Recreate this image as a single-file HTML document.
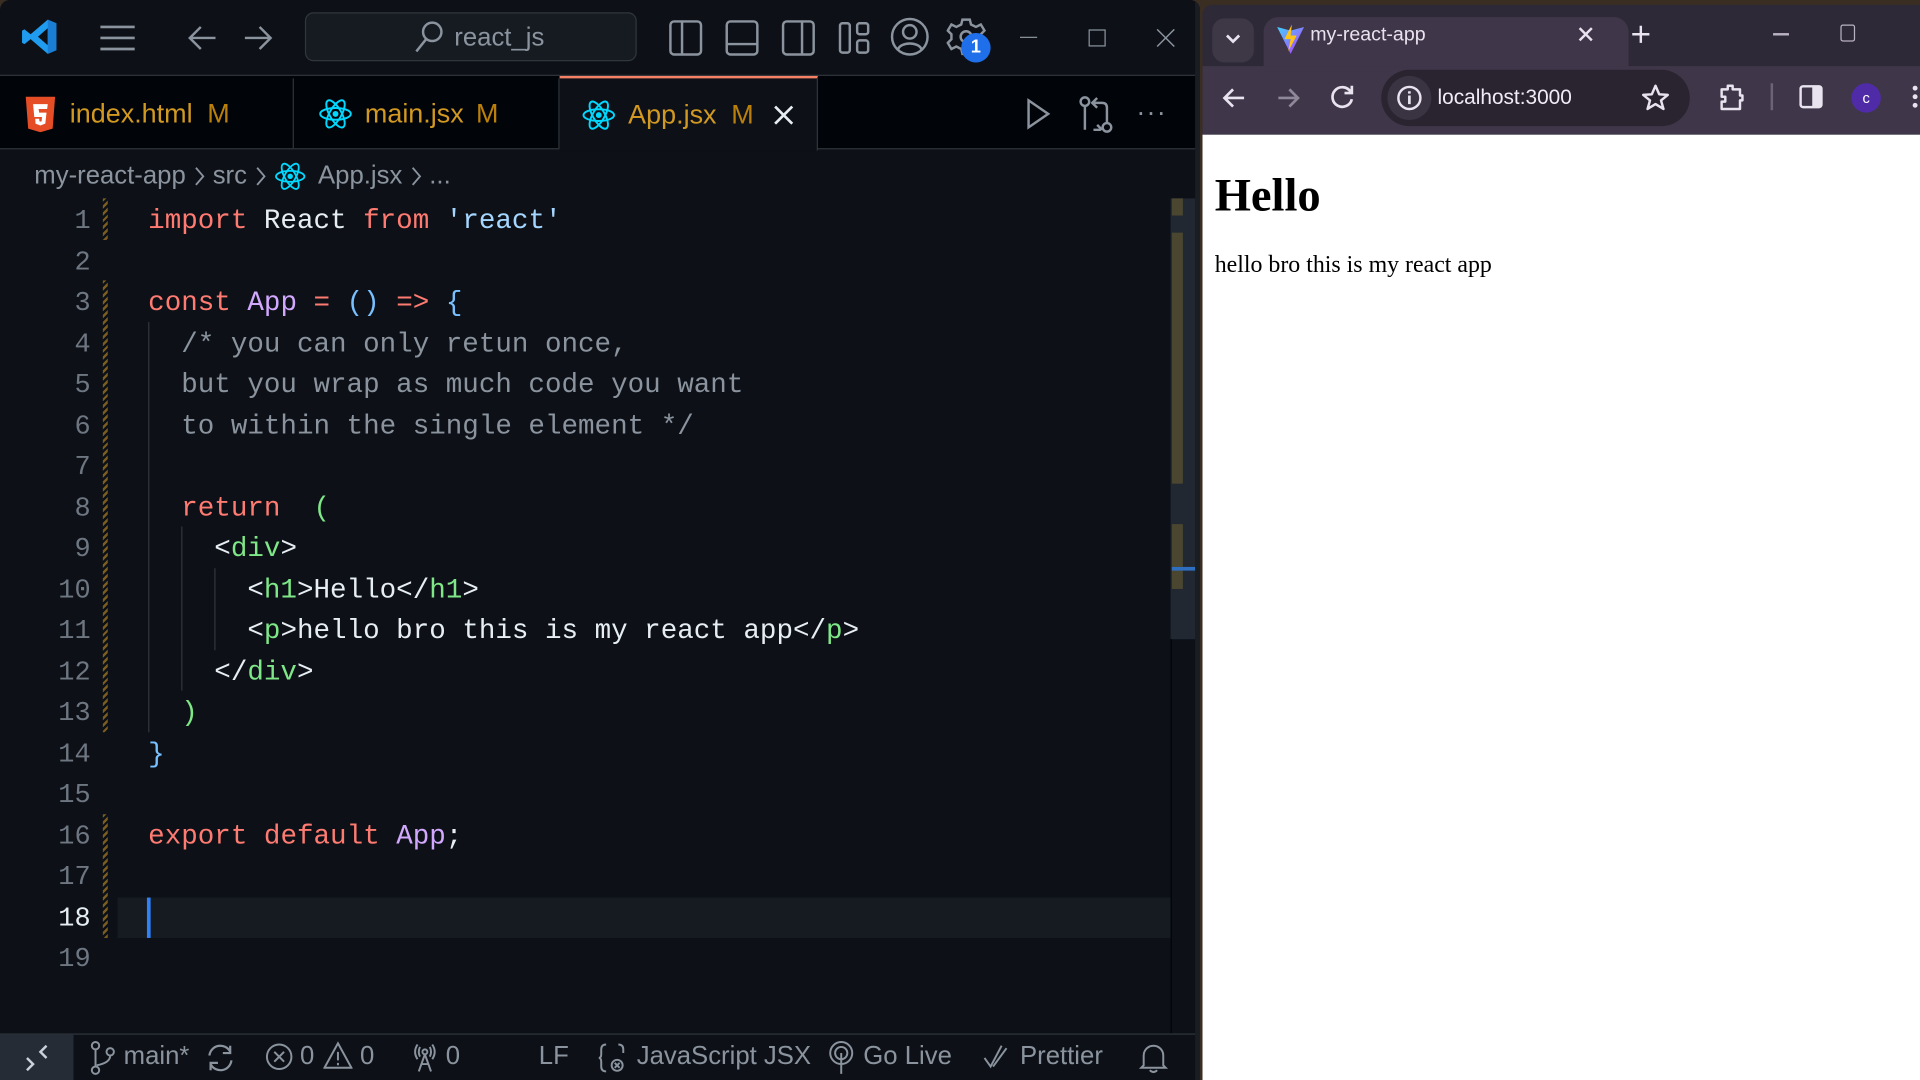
<!DOCTYPE html>
<html><head><meta charset="utf-8"><style>
html,body{margin:0;padding:0;width:1920px;height:1080px;overflow:hidden;background:#3a2e22}
#s{position:absolute;left:0;top:0;width:1568px;height:882px;transform:scale(1.22449);transform-origin:0 0;font-family:"Liberation Sans",sans-serif}
.a{position:absolute}
.ui{color:#8b949e}
.code{position:absolute;left:0;font-family:"Liberation Mono",monospace;font-size:22.5px;white-space:pre;color:#e6edf3;line-height:33.5px;height:33.5px}
.ln{position:absolute;width:74px;left:0;text-align:right;font-family:"Liberation Mono",monospace;font-size:22px;color:#6e7681;line-height:33.5px}
.k{color:#ff7b72}.f{color:#d2a8ff}.s{color:#a5d6ff}.b{color:#79c0ff}.c{color:#8b949e}.g{color:#7ee787}
.tab{position:absolute;top:64px;height:60px;display:flex;align-items:center;font-size:22px;color:#d29922;box-sizing:border-box}
.gut{position:absolute;left:84px;width:4px;background:repeating-linear-gradient(135deg,#7a5d1f 0 2px,transparent 2px 4px)}
.st{position:absolute;top:850px;font-size:21px;color:#8b949e;line-height:26px}
.chev{display:inline-block;margin:0 6px}
</style></head><body><div id="s">
<!-- VS Code -->
<div class="a" style="left:0;top:0;width:980px;height:882px;background:#0d1117;border-radius:8px 8px 0 0;overflow:hidden">
 <svg class="a" style="left:16px;top:14px" width="32" height="32" viewBox="0 0 32 32"><path d="M23 2 L30 5 V27 L23 30 L9 18 L4 22 L2 21 V11 L4 10 L9 14 Z M23 9 L15 16 L23 23 Z" fill="#1f9cf0"/><path d="M23 2 L30 5 V27 L23 30 Z" fill="#1a7fd4"/></svg>
 <svg class="a" style="left:80px;top:18px" width="32" height="26"><path d="M2 4H30M2 13H30M2 22H30" stroke="#8b949e" stroke-width="2.2"/></svg>
 <svg class="a" style="left:152px;top:18px" width="26" height="26"><path d="M24 13H3M12 4L3 13L12 22" stroke="#8b949e" stroke-width="2" fill="none"/></svg>
 <svg class="a" style="left:198px;top:18px" width="26" height="26"><path d="M2 13H23M14 4L23 13L14 22" stroke="#8b949e" stroke-width="2" fill="none"/></svg>
 <div class="a" style="left:249px;top:10px;width:271px;height:40px;background:#161b22;border:1px solid #30363d;border-radius:7px;box-sizing:border-box"></div>
 <svg class="a" style="left:337px;top:16px" width="26" height="28"><circle cx="16" cy="10" r="7.5" stroke="#8b949e" stroke-width="2" fill="none"/><path d="M11 16L3 26" stroke="#8b949e" stroke-width="2"/></svg>
 <div class="a ui" style="left:371px;top:19px;font-size:21px">react_js</div>
 <svg class="a" style="left:546px;top:16px" width="28" height="30"><rect x="1.5" y="1.5" width="25" height="27" rx="3" stroke="#8b949e" stroke-width="2" fill="none"/><path d="M11 2V28" stroke="#8b949e" stroke-width="2"/></svg>
 <svg class="a" style="left:592px;top:16px" width="28" height="30"><rect x="1.5" y="1.5" width="25" height="27" rx="3" stroke="#8b949e" stroke-width="2" fill="none"/><path d="M2 20H26" stroke="#8b949e" stroke-width="2"/></svg>
 <svg class="a" style="left:638px;top:16px" width="28" height="30"><rect x="1.5" y="1.5" width="25" height="27" rx="3" stroke="#8b949e" stroke-width="2" fill="none"/><path d="M17 2V28" stroke="#8b949e" stroke-width="2"/></svg>
 <svg class="a" style="left:684px;top:16px" width="28" height="30"><rect x="2" y="3" width="8" height="24" rx="2" stroke="#8b949e" stroke-width="2" fill="none"/><rect x="16" y="3" width="9" height="9" rx="2" stroke="#8b949e" stroke-width="2" fill="none"/><rect x="16" y="17" width="9" height="10" rx="2" stroke="#8b949e" stroke-width="2" fill="none"/></svg>
 <svg class="a" style="left:727px;top:14px" width="32" height="32"><circle cx="16" cy="16" r="14.5" stroke="#8b949e" stroke-width="2" fill="none"/><circle cx="16" cy="12" r="5.5" stroke="#8b949e" stroke-width="2" fill="none"/><path d="M6.5 26C9 20 23 20 25.5 26" stroke="#8b949e" stroke-width="2" fill="none"/></svg>
 <svg class="a" style="left:773px;top:14px" width="34" height="34"><path d="M13 2H19L20 6L24 8L28 6L31 11L28 14V18L31 21L28 26L24 24L20 26L19 30H13L12 26L8 24L4 26L1 21L4 18V14L1 11L4 6L8 8L12 6Z" stroke="#8b949e" stroke-width="2" fill="none"/><circle cx="16" cy="16" r="4.5" stroke="#8b949e" stroke-width="2" fill="none"/></svg>
 <div class="a" style="left:785px;top:27px;width:24px;height:24px;border-radius:50%;background:#1f6feb;color:#fff;font-size:15px;font-weight:bold;text-align:center;line-height:24px">1</div>
 <div class="a" style="left:833px;top:30px;width:14px;height:1px;background:#8b949e"></div>
 <div class="a" style="left:889px;top:24px;width:12px;height:12px;border:1px solid #8b949e"></div>
 <svg class="a" style="left:944px;top:23px" width="16" height="16"><path d="M1 1L15 15M15 1L1 15" stroke="#8b949e" stroke-width="1.2"/></svg>
 <!-- tab bar -->
 <div class="a" style="left:0;top:61px;width:980px;height:61px;background:#010409;border-top:1px solid #30363d;border-bottom:1px solid #30363d;box-sizing:border-box"></div>
 <div class="tab" style="left:0;width:240px;height:57px;border-right:1px solid #30363d;padding-left:20px">
  <svg width="26" height="30" viewBox="0 0 26 30"><path d="M1 1H25L23 27L13 30L3 27Z" fill="#e44d26"/><path d="M7 7H19L18.5 11H11.5L12 14H18L17 23L13 24.5L9 23L8.8 19H12L12.2 21L13 21.3L14 21L14.3 17.5H8Z" fill="#fff"/></svg>
  <span style="margin-left:11px">index.html</span><span style="margin-left:12px;color:#bb8009">M</span></div>
 <div class="tab" style="left:240px;width:217px;height:57px;border-right:1px solid #30363d;padding-left:20px">
  <svg width="28" height="28" viewBox="-14 -14 28 28"><g stroke="#00d8ff" stroke-width="1.6" fill="none"><ellipse rx="12.5" ry="4.8"/><ellipse rx="12.5" ry="4.8" transform="rotate(60)"/><ellipse rx="12.5" ry="4.8" transform="rotate(120)"/></g><circle r="2.4" fill="#00d8ff"/></svg>
  <span style="margin-left:10px">main.jsx</span><span style="margin-left:10px;color:#bb8009">M</span></div>
 <div class="tab" style="left:457px;top:62px;width:211px;background:#0d1117;border-top:2px solid #f78166;border-right:1px solid #30363d;padding-left:18px;height:61px">
  <svg width="28" height="28" viewBox="-14 -14 28 28"><g stroke="#00d8ff" stroke-width="1.6" fill="none"><ellipse rx="12.5" ry="4.8"/><ellipse rx="12.5" ry="4.8" transform="rotate(60)"/><ellipse rx="12.5" ry="4.8" transform="rotate(120)"/></g><circle r="2.4" fill="#00d8ff"/></svg>
  <span style="margin-left:10px">App.jsx</span><span style="margin-left:12px;color:#bb8009">M</span>
  <svg style="margin-left:16px" width="18" height="18"><path d="M2 2L16 16M16 2L2 16" stroke="#e6edf3" stroke-width="2.2"/></svg></div>
 <svg class="a" style="left:837px;top:79px" width="22" height="28"><path d="M3 3L19 14L3 25Z" stroke="#8b949e" stroke-width="2" fill="none"/></svg>
 <svg class="a" style="left:880px;top:78px" width="30" height="32"><g stroke="#8b949e" stroke-width="2" fill="none"><circle cx="6" cy="5" r="3.5"/><path d="M6 9V28"/><circle cx="24" cy="26" r="3.5"/><path d="M24 22V10Q24 6 20 6H13M16 2L12 6L16 10"/><path d="M13 28H19M16 24L20 28"/></g></svg>
 <div class="a" style="left:928px;top:79px;color:#8b949e;font-size:22px;letter-spacing:1px">···</div>
 <!-- breadcrumb -->
 <div class="a" style="left:28px;top:131px;font-size:21px;color:#8b949e;display:flex;align-items:center;white-space:pre">my-react-app<svg class="chev" width="10" height="18"><path d="M2 2L8 9L2 16" stroke="#8b949e" stroke-width="1.5" fill="none"/></svg>src<svg class="chev" width="10" height="18"><path d="M2 2L8 9L2 16" stroke="#8b949e" stroke-width="1.5" fill="none"/></svg><svg width="26" height="26" viewBox="-14 -14 28 28"><g stroke="#00d8ff" stroke-width="1.6" fill="none"><ellipse rx="12.5" ry="4.8"/><ellipse rx="12.5" ry="4.8" transform="rotate(60)"/><ellipse rx="12.5" ry="4.8" transform="rotate(120)"/></g><circle r="2.4" fill="#00d8ff"/></svg><span style="margin-left:10px">App.jsx</span><svg class="chev" width="10" height="18"><path d="M2 2L8 9L2 16" stroke="#8b949e" stroke-width="1.5" fill="none"/></svg>...</div>
 <!-- current line -->
 <div class="a" style="left:96px;top:733px;width:860px;height:33px;background:#161b22"></div>
 <div class="a" style="left:120px;top:733px;width:3px;height:33px;background:#2f81f7"></div>
 <div class="gut" style="top:162px;height:34px"></div>
 <div class="gut" style="top:229px;height:369px"></div>
 <div class="gut" style="top:665px;height:101px"></div>
 <div class="a" style="left:121px;top:263px;width:1px;height:335px;background:#30363d"></div>
 <div class="a" style="left:148px;top:430px;width:1px;height:134px;background:#30363d"></div>
 <div class="a" style="left:175px;top:464px;width:1px;height:67px;background:#30363d"></div>
 <div class="ln" style="top:164px">1<br>2<br>3<br>4<br>5<br>6<br>7<br>8<br>9<br>10<br>11<br>12<br>13<br>14<br>15<br>16<br>17<br><span style="color:#e6edf3">18</span><br>19</div>
 <div class="code" style="left:121px;top:164px"><span class="k">import</span> React <span class="k">from</span> <span class="s">'react'</span></div>
 <div class="code" style="left:121px;top:231px"><span class="k">const</span> <span class="f">App</span> <span class="k">=</span> <span class="b">()</span> <span class="k">=&gt;</span> <span class="b">{</span></div>
 <div class="code c" style="left:148px;top:264.5px">/* you can only retun once,</div>
 <div class="code c" style="left:148px;top:298px">but you wrap as much code you want</div>
 <div class="code c" style="left:148px;top:331.5px">to within the single element */</div>
 <div class="code" style="left:148px;top:398.5px"><span class="k">return</span>  <span class="g">(</span></div>
 <div class="code" style="left:175px;top:432px">&lt;<span class="g">div</span>&gt;</div>
 <div class="code" style="left:202px;top:465.5px">&lt;<span class="g">h1</span>&gt;Hello&lt;/<span class="g">h1</span>&gt;</div>
 <div class="code" style="left:202px;top:499px">&lt;<span class="g">p</span>&gt;hello bro this is my react app&lt;/<span class="g">p</span>&gt;</div>
 <div class="code" style="left:175px;top:532.5px">&lt;/<span class="g">div</span>&gt;</div>
 <div class="code g" style="left:148px;top:566px">)</div>
 <div class="code b" style="left:121px;top:599.5px">}</div>
 <div class="code" style="left:121px;top:666.5px"><span class="k">export</span> <span class="k">default</span> <span class="f">App</span>;</div>
 <div class="a" style="left:956px;top:162px;width:24px;height:360px;background:#222831"></div>
 <div class="a" style="left:956px;top:522px;width:1px;height:323px;background:#010409"></div>
 <div class="a" style="left:957px;top:162px;width:9px;height:14px;background:#4b4630"></div>
 <div class="a" style="left:957px;top:190px;width:9px;height:205px;background:#4b4630"></div>
 <div class="a" style="left:957px;top:428px;width:9px;height:53px;background:#4b4630"></div>
 <div class="a" style="left:957px;top:463px;width:23px;height:3px;background:#2f6fc0"></div>
 <!-- status bar -->
 <div class="a" style="left:0;top:844px;width:980px;height:38px;background:#0d1117;border-top:1px solid #30363d;box-sizing:border-box"></div>
 <div class="a" style="left:0;top:845px;width:60px;height:37px;background:#262c36"></div>
 <svg class="a" style="left:18px;top:852px" width="24" height="24"><path d="M4 12L9 17L4 22M20 2L15 7L20 12" stroke="#c9d1d9" stroke-width="2" fill="none"/></svg>
 <svg class="a" style="left:72px;top:850px" width="24" height="28"><g stroke="#8b949e" stroke-width="1.6" fill="none"><circle cx="6" cy="4" r="3"/><circle cx="6" cy="24" r="3"/><circle cx="18" cy="9" r="3"/><path d="M6 7V21M18 12Q18 18 7 20"/></g></svg>
 <div class="st" style="left:101px">main*</div>
 <svg class="a" style="left:167px;top:851px" width="26" height="26"><g stroke="#8b949e" stroke-width="1.8" fill="none"><path d="M4 11A9 9 0 0 1 21 8M22 15A9 9 0 0 1 5 18"/><path d="M21 3V9H15M5 23V17H11"/></g></svg>
 <svg class="a" style="left:216px;top:851px" width="24" height="24"><circle cx="12" cy="12" r="10" stroke="#8b949e" stroke-width="1.6" fill="none"/><path d="M8 8L16 16M16 8L8 16" stroke="#8b949e" stroke-width="1.6"/></svg>
 <div class="st" style="left:245px">0</div>
 <svg class="a" style="left:264px;top:850px" width="24" height="24"><path d="M12 2L23 22H1Z" stroke="#8b949e" stroke-width="1.6" fill="none"/><path d="M12 9V16M12 18V20" stroke="#8b949e" stroke-width="1.6"/></svg>
 <div class="st" style="left:294px">0</div>
 <svg class="a" style="left:335px;top:850px" width="24" height="26"><g stroke="#8b949e" stroke-width="1.6" fill="none"><circle cx="12" cy="9" r="2"/><path d="M12 11L7 25M12 11L17 25M9 19H15M6 3Q2 9 6 15M18 3Q22 9 18 15M8 5Q6 9 8 13M16 5Q18 9 16 13"/></g></svg>
 <div class="st" style="left:364px">0</div>
 <div class="st" style="left:440px">LF</div>
 <svg class="a" style="left:488px;top:850px" width="24" height="28"><g stroke="#8b949e" stroke-width="1.6" fill="none"><path d="M7 3Q3 3 3 7V11Q3 14 1 14Q3 14 3 17V21Q3 25 7 25M17 3Q21 3 21 7V10"/><circle cx="16" cy="20" r="4.5"/><path d="M14 18L18 22M18 18L14 22"/></g></svg>
 <div class="st" style="left:520px">JavaScript JSX</div>
 <svg class="a" style="left:676px;top:850px" width="22" height="28"><g stroke="#8b949e" stroke-width="1.6" fill="none"><circle cx="11" cy="10" r="9"/><circle cx="11" cy="10" r="5"/><path d="M11 10V27"/></g></svg>
 <div class="st" style="left:705px">Go Live</div>
 <svg class="a" style="left:802px;top:852px" width="26" height="22"><path d="M2 12L7 19L16 2M9 19L20 4" stroke="#8b949e" stroke-width="1.6" fill="none"/></svg>
 <div class="st" style="left:833px">Prettier</div>
 <svg class="a" style="left:930px;top:850px" width="24" height="28"><path d="M4 20V12A8 8 0 0 1 20 12V20L22 22H2Z M9 24Q12 27 15 24" stroke="#8b949e" stroke-width="1.6" fill="none"/></svg>
 <div class="a" style="left:976px;top:0;width:4px;height:882px;background:#1a1d22"></div>
</div>
<!-- Browser -->
<div class="a" style="left:982px;top:4px;width:586px;height:878px;background:#2e2937;border-radius:8px 0 0 0;overflow:hidden">
 <div class="a" style="left:8px;top:11px;width:34px;height:36px;background:#3d3746;border-radius:10px"></div>
 <svg class="a" style="left:18px;top:22px" width="14" height="12"><path d="M2 3L7 8L12 3" stroke="#e8e3ef" stroke-width="2.2" fill="none"/></svg>
 <div class="a" style="left:50px;top:10px;width:298px;height:60px;background:#3f3749;border-radius:12px 12px 0 0"></div>
 <svg class="a" style="left:60px;top:16px" width="24" height="26"><defs><linearGradient id="vg" x1="0" y1="0" x2="1" y2="1"><stop offset="0" stop-color="#41d1ff"/><stop offset="1" stop-color="#bd34fe"/></linearGradient></defs><path d="M1 2L12 24L23 2L12 5Z" fill="url(#vg)"/><path d="M13 0L7 12H12L10 22L17 9H12Z" fill="#ffc517"/></svg>
 <div class="a" style="left:88px;top:16px;font-size:16px;color:#e8e3ef">my-react-app</div>
 <svg class="a" style="left:306px;top:17px" width="14" height="14"><path d="M2 2L12 12M12 2L2 12" stroke="#e8e3ef" stroke-width="2"/></svg>
 <svg class="a" style="left:350px;top:16px" width="16" height="16"><path d="M8 1V15M1 8H15" stroke="#e8e3ef" stroke-width="2"/></svg>
 <div class="a" style="left:466px;top:23px;width:13px;height:1.5px;background:#b8b2c2"></div>
 <div class="a" style="left:521px;top:16px;width:10px;height:12px;border:1.5px solid #b8b2c2;border-radius:2px"></div>
 <div class="a" style="left:0;top:50px;width:586px;height:56px;background:#3f3749"></div>
 <svg class="a" style="left:16px;top:66px" width="20" height="20"><path d="M18 10H3M9 3L2 10L9 17" stroke="#e8e3ef" stroke-width="2.2" fill="none"/></svg>
 <svg class="a" style="left:60px;top:66px" width="20" height="20"><path d="M2 10H17M11 3L18 10L11 17" stroke="#8f8899" stroke-width="2.2" fill="none"/></svg>
 <svg class="a" style="left:104px;top:64px" width="22" height="22"><path d="M17 7A8 8 0 1 0 18 13" stroke="#e8e3ef" stroke-width="2.2" fill="none"/><path d="M18 2V8H12" stroke="#e8e3ef" stroke-width="2.2" fill="none"/></svg>
 <div class="a" style="left:146px;top:53px;width:252px;height:46px;background:#2a2431;border-radius:23px"></div>
 <div class="a" style="left:151px;top:58px;width:36px;height:36px;background:#3a3342;border-radius:18px"></div>
 <svg class="a" style="left:158px;top:65px" width="22" height="22"><circle cx="11" cy="11" r="9" stroke="#e8e3ef" stroke-width="2" fill="none"/><path d="M11 9V16M11 5.5V7.5" stroke="#e8e3ef" stroke-width="2.2"/></svg>
 <div class="a" style="left:192px;top:66px;font-size:17px;color:#f0ecf5">localhost:3000</div>
 <svg class="a" style="left:358px;top:64px" width="24" height="24"><path d="M12 2L15 9L22 9.5L16.5 14L18.5 21L12 17L5.5 21L7.5 14L2 9.5L9 9Z" stroke="#e8e3ef" stroke-width="2" fill="none" stroke-linejoin="round"/></svg>
 <svg class="a" style="left:420px;top:63px" width="24" height="26"><path d="M4 6H9V3H13V6H19V11H21V15H19V22H4V16H7V12H4Z" stroke="#e8e3ef" stroke-width="2" fill="none" stroke-linejoin="round"/></svg>
 <div class="a" style="left:464px;top:64px;width:1.5px;height:22px;background:#6b6476"></div>
 <svg class="a" style="left:487px;top:65px" width="20" height="20"><rect x="1.5" y="1.5" width="17" height="17" rx="2" stroke="#e8e3ef" stroke-width="2" fill="none"/><rect x="11" y="2" width="7" height="16" fill="#e8e3ef"/></svg>
 <div class="a" style="left:530px;top:64px;width:24px;height:24px;border-radius:12px;background:#4f2ba8;color:#fff;font-size:12px;text-align:center;line-height:24px">c</div>
 <div class="a" style="left:580px;top:66px;width:4px;height:4px;border-radius:2px;background:#e8e3ef;box-shadow:0 7px 0 #e8e3ef,0 14px 0 #e8e3ef"></div>
 <div class="a" style="left:0;top:106px;width:586px;height:772px;background:#fff">
  <div class="a" style="left:10px;top:28px;font-family:'Liberation Serif',serif;font-weight:bold;font-size:38px;color:#000">Hello</div>
  <div class="a" style="left:10px;top:96px;font-family:'Liberation Serif',serif;font-size:19.5px;color:#000">hello bro this is my react app</div>
 </div>
</div>
</div></body></html>
